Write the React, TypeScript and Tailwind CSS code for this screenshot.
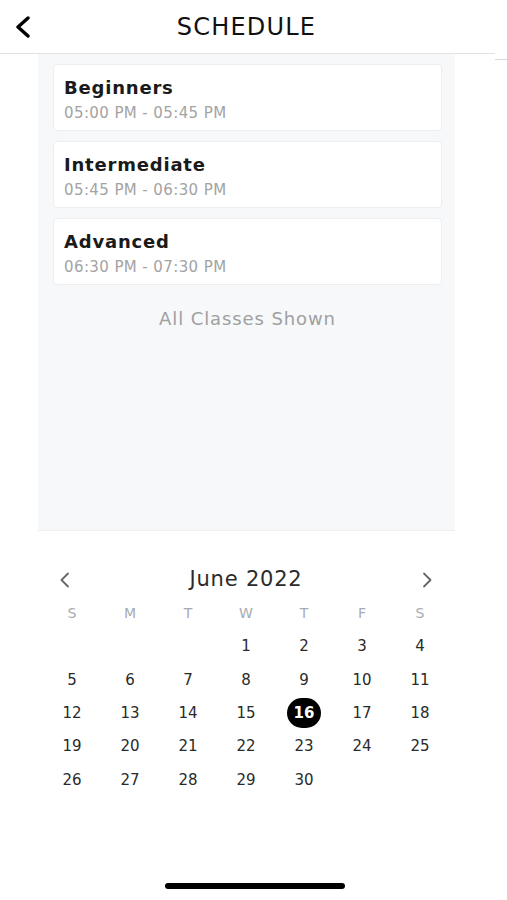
import React from "react";

const weeks: (number | null)[][] = [
  [null, null, null, 1, 2, 3, 4],
  [5, 6, 7, 8, 9, 10, 11],
  [12, 13, 14, 15, 16, 17, 18],
  [19, 20, 21, 22, 23, 24, 25],
  [26, 27, 28, 29, 30, null, null],
];

const classes = [
  { name: "Beginners", time: "05:00 PM - 05:45 PM" },
  { name: "Intermediate", time: "05:45 PM - 06:30 PM" },
  { name: "Advanced", time: "06:30 PM - 07:30 PM" },
];

export default function App() {
  return (
    <div
      className="relative w-[507px] h-[900px] bg-white overflow-hidden"
      style={{ fontFamily: '"DejaVu Sans", "Open Sans", sans-serif' }}
    >
      {/* header */}
      <div className="relative h-[53px] flex items-center justify-center pr-[14px]">
        <svg
          className="absolute left-[13px] top-[16px]"
          width="20"
          height="22"
          viewBox="0 0 20 22"
          fill="none"
        >
          <path d="M15 2 L5 11 L15 20" stroke="#000" strokeWidth="3.4" strokeLinecap="round" strokeLinejoin="round" />
        </svg>
        <span className="text-[24px] tracking-[1.2px] text-[#111]">SCHEDULE</span>
      </div>
      <div className="w-[495px] h-[1px] bg-[#e2e2e2]" />
      <div className="absolute left-[495px] top-[59px] w-[12px] h-[1px] bg-[#d8d8d8]" />

      {/* panel */}
      <div className="ml-[38px] w-[417px] h-[477px] bg-[#f7f8fa] border-b border-[#eceef1] pl-[15px] pr-[13px] pt-[10px] flex flex-col gap-[10px]">
        {classes.map((c) => (
          <div
            key={c.name}
            className="h-[67px] bg-white rounded-[4px] border border-[#eceef0] pl-[10px] pt-[11px] flex flex-col"
          >
            <span className="text-[18px] font-semibold leading-[24px] tracking-[0.8px] text-[#1a1a1a]">{c.name}</span>
            <span className="mt-[2px] text-[15px] leading-[22px] text-[#a3a3a3] tracking-[0.4px]">{c.time}</span>
          </div>
        ))}
        <div className="mt-[10px] text-center text-[18px] text-[#a0a0a0] tracking-[0.9px]">All Classes Shown</div>
      </div>

      {/* calendar */}
      <div className="pt-[37px] pl-[43px]">
        <div className="w-[406px] h-[24px] flex items-center justify-between">
          <svg width="14" height="16" viewBox="0 0 14 16" fill="none" className="ml-[15px]">
            <path d="M10 1.5 L3.5 8 L10 14.5" stroke="#666" strokeWidth="1.8" strokeLinecap="round" strokeLinejoin="round" />
          </svg>
          <span className="text-[21px] text-[#2b2b2b] tracking-[0.8px]">June 2022</span>
          <svg width="14" height="16" viewBox="0 0 14 16" fill="none" className="mr-[15px]">
            <path d="M4 1.5 L10.5 8 L4 14.5" stroke="#666" strokeWidth="1.8" strokeLinecap="round" strokeLinejoin="round" />
          </svg>
        </div>
        <div className="mt-[9px] grid grid-cols-7 w-[406px] h-[24px] items-center">
          {["S", "M", "T", "W", "T", "F", "S"].map((d, i) => (
            <span key={i} className="text-center text-[14px] text-[#a6abb3]">
              {d}
            </span>
          ))}
        </div>
        <div className="mt-[5px] flex flex-col w-[406px]">
          {weeks.map((w, wi) => (
            <div key={wi} className="grid grid-cols-7 h-[33.3px] items-center">
              {w.map((d, di) => (
                <div key={di} className="flex justify-center items-center">
                  {d === 16 ? (
                    <span className="w-[34px] h-[30px] rounded-full bg-black text-white text-[15px] font-semibold flex items-center justify-center">
                      16
                    </span>
                  ) : (
                    <span className="text-[15px] text-[#2a2a2a]">{d ?? ""}</span>
                  )}
                </div>
              ))}
            </div>
          ))}
        </div>
      </div>

      {/* home indicator */}
      <div className="absolute left-[165px] top-[883px] w-[180px] h-[6px] rounded-full bg-black" />
    </div>
  );
}
